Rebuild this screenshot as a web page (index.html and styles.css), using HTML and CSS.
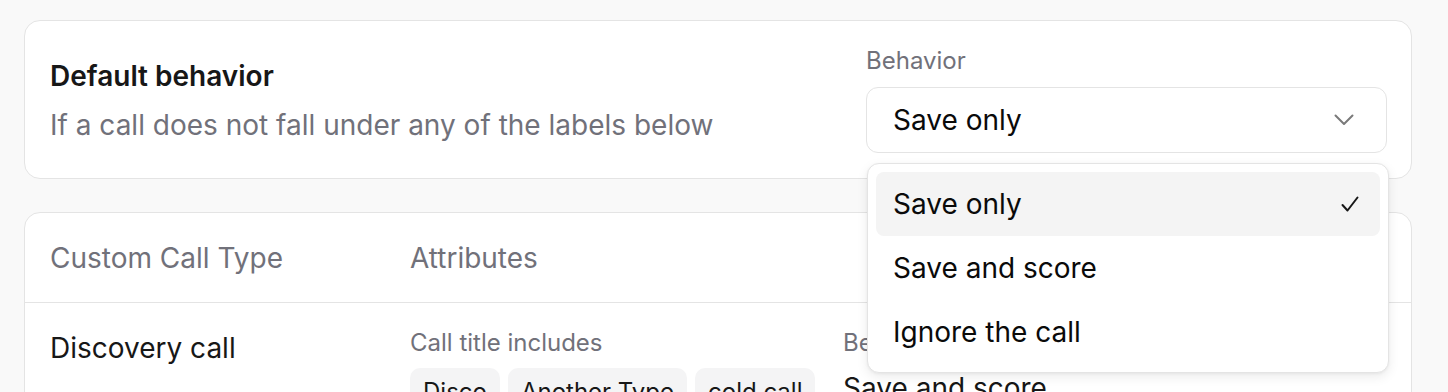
FILE: index.html
```html
<!DOCTYPE html>
<html lang="en">
<head>
<meta charset="utf-8">
<title>Call types</title>
<link rel="stylesheet" href="styles.css">
</head>
<body>
<main class="page">
  <section class="card default-card">
    <div class="default-text">
      <h2 class="title">Default behavior</h2>
      <p class="subtitle">If a call does not fall under any of the labels below</p>
    </div>
    <div class="field">
      <label class="field-label">Behavior</label>
      <div class="select-wrap">
        <button class="select" type="button">
          <span>Save only</span>
          <svg class="chevron" width="20" height="12" viewBox="0 0 20 12" fill="none"><path d="M1.5 1.5 L10 10 L18.5 1.5" stroke="#7a7a7a" stroke-width="2" stroke-linecap="round" stroke-linejoin="round"/></svg>
        </button>
        <ul class="menu">
          <li class="menu-item active"><span>Save only</span>
            <svg class="check" width="18" height="17" viewBox="0 0 18 17" fill="none"><path d="M1.5 9 L6.5 14.5 L16.5 1.5" stroke="#171717" stroke-width="2" stroke-linecap="round" stroke-linejoin="round"/></svg>
          </li>
          <li class="menu-item"><span>Save and score</span></li>
          <li class="menu-item"><span>Ignore the call</span></li>
        </ul>
      </div>
    </div>
  </section>

  <section class="card table-card">
    <div class="table-row table-head">
      <div class="head-cell">Custom Call Type</div>
      <div class="head-cell">Attributes</div>
      <div class="head-cell"></div>
    </div>
    <div class="table-row table-body">
      <div class="type-name">Discovery call</div>
      <div class="attr">
        <div class="small-label">Call title includes</div>
        <div class="chips">
          <span class="chip">Disco</span>
          <span class="chip">Another Type</span>
          <span class="chip">cold call</span>
        </div>
      </div>
      <div class="attr">
        <div class="small-label">Behavior</div>
        <div class="value">Save and score</div>
      </div>
    </div>
  </section>
</main>
</body>
</html>
```

FILE: styles.css
```css
* { box-sizing: border-box; }

html, body {
  margin: 0;
  padding: 0;
  background: #f9f9f9;
}

body {
  font-family: Inter, "Noto Sans", sans-serif;
  color: #171717;
}

.page {
  padding: 20px 36px 40px 24px;
}

.card {
  background: #ffffff;
  border: 1px solid #e4e4e4;
  border-radius: 16px;
}

.default-card {
  display: flex;
  align-items: center;
  justify-content: space-between;
  padding: 24px 24px 25px 25px;
  margin-bottom: 33px;
  position: relative;
  z-index: 2;
}

.default-text {
  display: flex;
  flex-direction: column;
  gap: 9px;
  padding-top: 2px;
}

.title {
  margin: 0;
  font-size: 28px;
  line-height: 40px;
  font-weight: 600;
  color: #171717;
}

.subtitle {
  margin: 0;
  font-size: 28px;
  line-height: 40px;
  color: #71717a;
}

.field {
  width: 521px;
  display: flex;
  flex-direction: column;
}

.field-label {
  font-size: 24px;
  line-height: 32px;
  color: #71717a;
  margin-bottom: 10px;
}

.select-wrap {
  position: relative;
}

.select {
  width: 100%;
  height: 66px;
  display: flex;
  align-items: center;
  justify-content: space-between;
  padding: 0 32px 0 26px;
  background: #ffffff;
  border: 1px solid #e4e4e4;
  border-radius: 12px;
  font-family: inherit;
  font-size: 28px;
  color: #0a0a0a;
  cursor: pointer;
}

.chevron { display: block; }

.menu {
  position: absolute;
  top: 76px;
  left: 1px;
  width: 522px;
  margin: 0;
  padding: 8px;
  list-style: none;
  background: #ffffff;
  border: 1px solid #e4e4e4;
  border-radius: 12px;
  box-shadow: 0 4px 12px rgba(0, 0, 0, 0.08), 0 1px 3px rgba(0, 0, 0, 0.05);
  z-index: 10;
}

.menu-item {
  height: 64px;
  display: flex;
  align-items: center;
  justify-content: space-between;
  padding: 0 21px 0 17px;
  border-radius: 8px;
  font-size: 28px;
  color: #0a0a0a;
}

.menu-item.active {
  background: #f4f4f4;
}

.check { display: block; }

.table-card {
  min-height: 300px;
  position: relative;
  z-index: 1;
}

.table-row {
  display: grid;
  grid-template-columns: 336px 409px 1fr;
  column-gap: 24px;
  padding: 0 24px 0 25px;
}

.table-head {
  padding-top: 25px;
  padding-bottom: 24px;
  border-bottom: 1px solid #e4e4e4;
}

.head-cell {
  font-size: 28px;
  line-height: 40px;
  color: #71717a;
}

.table-body {
  padding-top: 24px;
  padding-bottom: 24px;
  align-items: start;
}

.type-name {
  font-size: 28px;
  line-height: 40px;
  color: #171717;
  padding-top: 1px;
}

.small-label {
  font-size: 24px;
  line-height: 32px;
  color: #71717a;
  margin-bottom: 9px;
}

.chips {
  display: flex;
  flex-wrap: nowrap;
  gap: 8px;
}

.chip {
  display: inline-block;
  flex: none;
  padding: 8px 13px;
  background: #f4f4f5;
  border-radius: 10px;
  font-size: 24px;
  line-height: 32px;
  color: #171717;
  white-space: nowrap;
}

.value {
  font-size: 28px;
  line-height: 40px;
  color: #171717;
}
```
